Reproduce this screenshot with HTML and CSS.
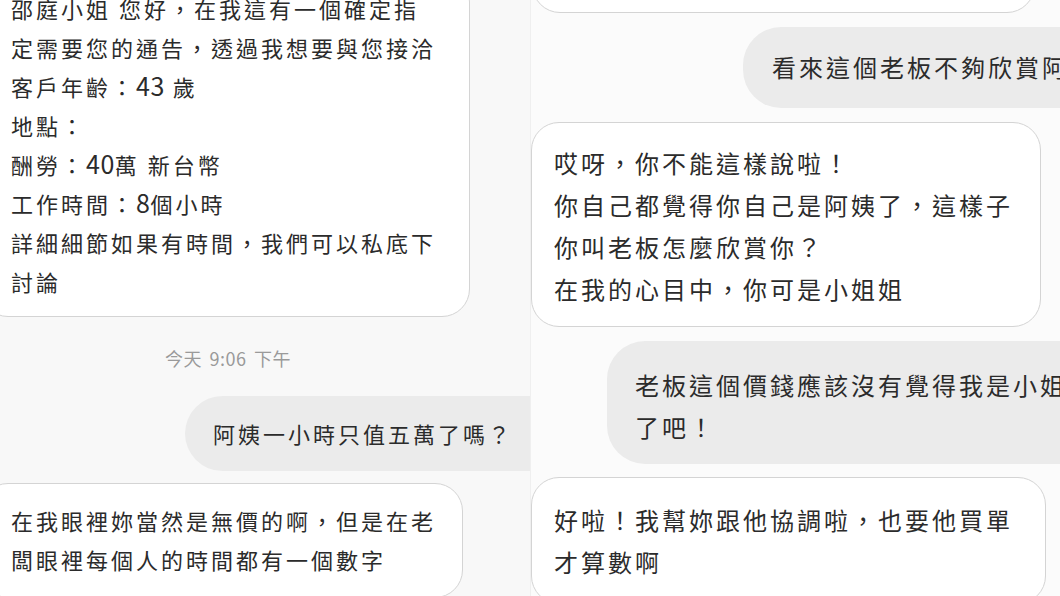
FILE: index.html
```html
<!DOCTYPE html>
<html lang="zh-Hant">

<head>
  <meta charset="UTF-8">
  <meta name="viewport" content="width=device-width, initial-scale=1.0">
  <title>對話截圖</title>

  <link rel="stylesheet" href="styles.css">
</head>

<body>
  <main class="shots">
    <section class="panel panel-left">
      <div class="msg msg-in first-in">
        邵庭小姐 您好，在我這有一個確定指<br>
        定需要您的通告，透過我想要與您接洽<br>
        客戶年齡：<span class="num">43</span> 歲<br>
        地點：<br>
        酬勞：<span class="num">40</span>萬 新台幣<br>
        工作時間：<span class="num">8</span>個小時<br>
        詳細細節如果有時間，我們可以私底下<br>
        討論
      </div>

      <div class="stamp">今天 9:06 下午</div>

      <div class="msg msg-out ask">阿姨一小時只值五萬了嗎？</div>

      <div class="msg msg-in reply-in">
        在我眼裡妳當然是無價的啊，但是在老<br>
        闆眼裡每個人的時間都有一個數字
      </div>
    </section>

    <section class="panel panel-right">
      <div class="msg msg-in cut-in"></div>

      <div class="msg msg-out boss-out">看來這個老板不夠欣賞阿姨</div>

      <div class="msg msg-in sister-in">
        哎呀，你不能這樣說啦！<br>
        你自己都覺得你自己是阿姨了，這樣子<br>
        你叫老板怎麼欣賞你？<br>
        在我的心目中，你可是小姐姐
      </div>

      <div class="msg msg-out price-out">
        老板這個價錢應該沒有覺得我是小姐姐<br>
        了吧！
      </div>

      <div class="msg msg-in deal-in">
        好啦！我幫妳跟他協調啦，也要他買單<br>
        才算數啊
      </div>
    </section>
  </main>
</body>

</html>
```

FILE: styles.css
```css
body {
  margin: 0;
  background: #f8f8f8;
}

.shots {
  display: flex;
  width: 1060px;
  height: 596px;
  overflow: hidden;
  font-family: "Noto Sans CJK TC", "Noto Sans", sans-serif;
  color: #2b2b2b;
}

.panel {
  display: flex;
  flex-direction: column;
  flex: none;
  width: 530px;
  height: 596px;
  overflow: hidden;
}

.panel-left {
  background: #f8f8f8;
  font-size: 22px;
  letter-spacing: 3px;
  line-height: 39px;
}

.panel-right {
  background: #fbfbfb;
  border-left: 1px solid #efefef;
  font-size: 24px;
  letter-spacing: 3px;
  line-height: 42px;
}

.msg {
  flex: none;
  white-space: nowrap;
  box-sizing: border-box;
}

.msg-in {
  background: #fff;
  border: 1.5px solid #d4d4d4;
  border-radius: 28px;
}

.msg-out {
  background: #ebebeb;
  border-radius: 38px;
}

.num {
  font-size: 25px;
  letter-spacing: 0.5px;
  line-height: 1;
}

/* left screenshot */
.first-in {
  margin: -26px 0 0 -20px;
  width: 490px;
  padding: 14px 0 15px 30px;
}

.stamp {
  margin: 31px 0 0 165px;
  font-size: 18px;
  letter-spacing: 0.5px;
  word-spacing: 3px;
  line-height: 20px;
  color: #9a9a9a;
}

.ask {
  margin: 28px -40px 0 185px;
  padding: 18px 0 18px 28px;
}

.reply-in {
  margin: 12px 0 0 -20px;
  width: 483px;
  padding: 17px 0 18px 30px;
}

/* right screenshot */
.cut-in {
  margin: -57px 0 0 1px;
  width: 503px;
  height: 70px;
}

.boss-out {
  margin: 14px -80px 0 212px;
  padding: 19px 0 20px 29px;
}

.sister-in {
  margin: 14px 0 0 0;
  width: 510px;
  padding: 19px 0 16px 22px;
}

.price-out {
  margin: 14px -80px 0 76px;
  padding: 23px 0 16px 28px;
}

.deal-in {
  margin: 13px 0 0 0;
  width: 515px;
  padding: 21px 0 20px 22px;
}
```
